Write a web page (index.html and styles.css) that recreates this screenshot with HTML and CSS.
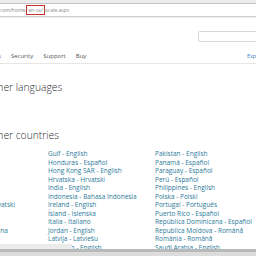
FILE: index.html
```html
<!DOCTYPE html>
<html lang="en">
<head>
    <meta charset="UTF-8">
    <title>Locale</title>
    <link rel="stylesheet" href="styles.css">
</head>
<body>
    <div class="address-bar">
        <div class="url">com/home/<span class="mark">en-ca/</span>locale.aspx</div>
    </div>

    <div class="header">
        <div class="search-row">
            <div class="search-box"></div>
        </div>
        <div class="nav-row">
            <ul class="nav">
                <li>Products</li>
                <li>Security</li>
                <li>Support</li>
                <li>Buy</li>
            </ul>
            <a class="explore" href="#">Explore</a>
        </div>
    </div>

    <div class="content">
        <h2 class="section-title">Other languages</h2>
        <h2 class="section-title countries">Other countries</h2>

        <div class="locale-list">
            <ul class="col">
                <li>Argentina - Español</li>
                <li>Belgique - Français</li>
                <li>België - Nederlands</li>
                <li>Bolivia - Español</li>
                <li>Brasil - Português</li>
                <li>Canada - English</li>
                <li>Hercegovina - Hrvatski</li>
                <li>Chile - Español</li>
                <li>Colombia - Español</li>
                <li>Česká Rep. - Čeština</li>
            </ul>
            <ul class="col">
                <li>Gulf - English</li>
                <li>Honduras - Español</li>
                <li>Hong Kong SAR - English</li>
                <li>Hrvatska - Hrvatski</li>
                <li>India - English</li>
                <li>Indonesia - Bahasa Indonesia</li>
                <li>Ireland - English</li>
                <li>Ísland - Íslenska</li>
                <li>Italia - Italiano</li>
                <li>Jordan - English</li>
                <li>Latvija - Latviešu</li>
                <li>Lebanon - English</li>
            </ul>
            <ul class="col">
                <li>Pakistan - English</li>
                <li>Panamá - Español</li>
                <li>Paraguay - Español</li>
                <li>Perú - Español</li>
                <li>Philippines - English</li>
                <li>Polska - Polski</li>
                <li>Portugal - Português</li>
                <li>Puerto Rico - Español</li>
                <li>República Dominicana - Español</li>
                <li>Republica Moldova - Română</li>
                <li>România - Română</li>
                <li>Saudi Arabia - English</li>
            </ul>
        </div>
    </div>

    <div class="scrollbar">
        <div class="thumb"></div>
    </div>
</body>
</html>
```

FILE: styles.css
```css
* {
    box-sizing: border-box;
    margin: 0;
    padding: 0;
}

body {
    width: 256px;
    height: 256px;
    overflow: hidden;
    background: white;
    font-family: 'Open Sans', 'Noto Sans', sans-serif;
    color: #333;
    position: relative;
}

ul {
    list-style: none;
}

/* browser address bar */
.address-bar {
    height: 18px;
    background: #ececec;
    padding-top: 3px;
}

.url {
    height: 14px;
    background: white;
    border-top: 1px solid #c4c4c4;
    border-bottom: 1px solid #cfcfcf;
    font-size: 5px;
    line-height: 12px;
    color: #8a8a8a;
    white-space: nowrap;
}

.mark {
    display: inline-block;
    border: 1.5px solid #c8302c;
    line-height: 8px;
    padding: 0 1px;
    margin: 0 -1px;
}

/* site header */
.header {
    height: 46px;
    border-bottom: 1px solid #e6e6e6;
}

.search-row {
    display: flex;
    justify-content: flex-end;
    padding-top: 13px;
}

.search-box {
    width: 62px;
    height: 11px;
    margin-right: -4px;
    border: 1px solid #d6d6d6;
    border-radius: 2px;
}

.nav-row {
    display: flex;
    justify-content: space-between;
    align-items: center;
    margin-top: 9px;
    height: 10px;
}

.nav {
    display: flex;
    gap: 10px;
    margin-left: -24px;
    font-size: 6px;
    color: #555;
}

.explore {
    font-size: 5.4px;
    color: #3b7ab8;
    text-decoration: none;
    margin-right: -10px;
}

/* main content */
.content {
    padding-top: 16px;
}

.section-title {
    font-weight: 300;
    font-size: 10.3px;
    line-height: 14px;
    color: #2e2e2e;
    margin-left: -14px;
    white-space: nowrap;
}

.countries {
    margin-top: 34px;
}

.locale-list {
    display: grid;
    grid-template-columns: 107px 107px 107px;
    margin-left: -59px;
    margin-top: 8px;
}

.col li {
    font-size: 6.5px;
    line-height: 8.5px;
    color: #2b7a9a;
    white-space: nowrap;
}

.col:first-child {
    padding-left: 6px;
}

.col:first-child li {
    visibility: hidden;
}

.col:first-child li:nth-child(7),
.col:first-child li:nth-child(10) {
    visibility: visible;
}

/* bottom scrollbar of the window */
.scrollbar {
    position: absolute;
    left: 0;
    right: 0;
    bottom: 0;
    height: 12px;
    background: linear-gradient(to bottom, transparent 0 5px, #b9b9b9 5px 8px, #dcdcdc 8px);
}

.thumb {
    width: 72px;
    height: 5px;
    background: #ebebeb;
}
```
